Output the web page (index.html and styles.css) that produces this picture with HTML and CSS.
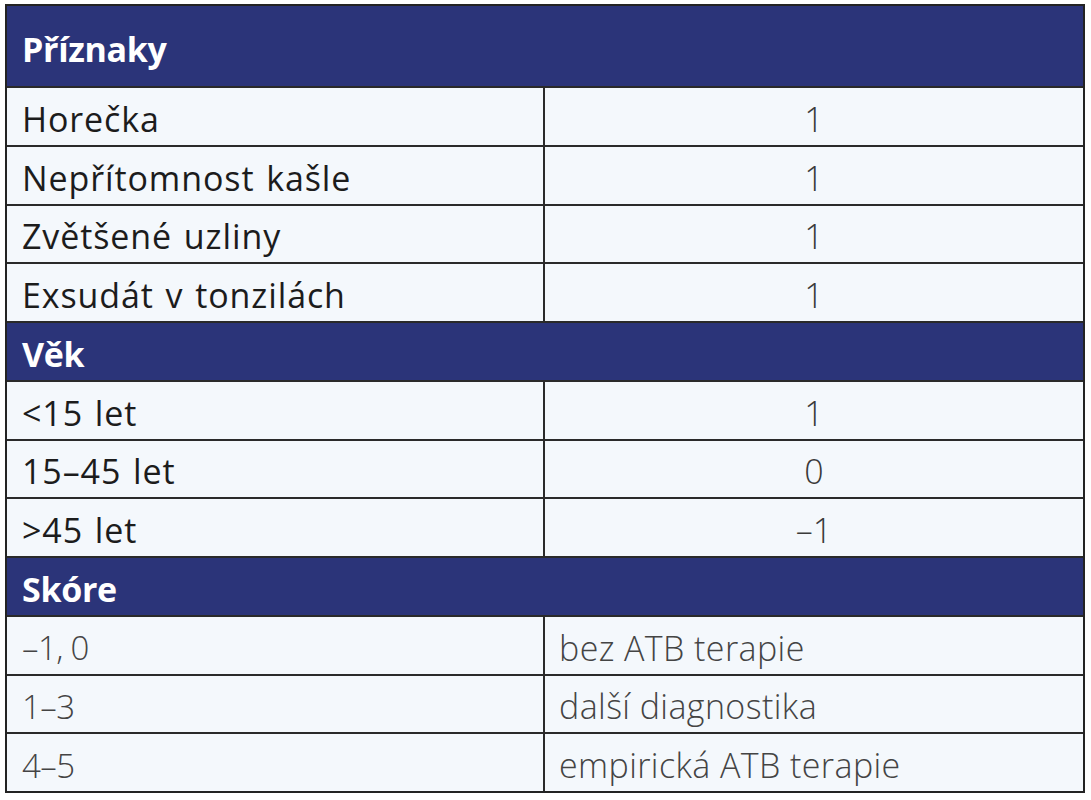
FILE: index.html
```html
<!DOCTYPE html>
<html lang="cs">
<head>
<meta charset="utf-8">
<title>Centorovo skóre</title>
<link rel="stylesheet" href="styles.css">
</head>
<body>
<div class="table">
  <div class="row head first"><span class="h">Příznaky</span></div>
  <div class="row"><div class="c l">Horečka</div><div class="c r">1</div></div>
  <div class="row"><div class="c l">Nepřítomnost kašle</div><div class="c r">1</div></div>
  <div class="row"><div class="c l">Zvětšené uzliny</div><div class="c r">1</div></div>
  <div class="row"><div class="c l">Exsudát v tonzilách</div><div class="c r">1</div></div>
  <div class="row head"><span class="h">Věk</span></div>
  <div class="row"><div class="c l">&lt;15 let</div><div class="c r">1</div></div>
  <div class="row"><div class="c l">15–45 let</div><div class="c r">0</div></div>
  <div class="row"><div class="c l">&gt;45 let</div><div class="c r">–1</div></div>
  <div class="row head"><span class="h">Skóre</span></div>
  <div class="row light"><div class="c l">–1, 0</div><div class="c t">bez ATB terapie</div></div>
  <div class="row light"><div class="c l">1–3</div><div class="c t">další diagnostika</div></div>
  <div class="row light"><div class="c l">4–5</div><div class="c t">empirická ATB terapie</div></div>
</div>
</body>
</html>
```

FILE: styles.css
```css
html, body {
  margin: 0;
  padding: 0;
  background: #ffffff;
}
body {
  padding: 4px 0 0 5px;
  font-family: "Open Sans", "Liberation Sans", sans-serif;
}
.table {
  width: 1076px;
  border: 2px solid #232323;
  background: #f4f8fc;
  display: flex;
  flex-direction: column;
}
.row {
  display: grid;
  grid-template-columns: 538px 1fr;
  height: 56.75px;
  border-top: 2px solid #2a2a2a;
  box-sizing: content-box;
}
.row.first {
  border-top: none;
  height: 80px;
}
.row.head {
  background: #2b3479;
  display: flex;
  align-items: center;
}
.h {
  color: #ffffff;
  font-weight: 700;
  font-size: 34px;
  padding-left: 15px;
  padding-top: 5px;
  letter-spacing: -0.3px;
}
.c {
  display: flex;
  align-items: center;
  font-size: 34px;
  color: #1c1c1c;
  font-weight: 500;
  letter-spacing: 0.9px;
  word-spacing: 2px;
  padding-top: 5px;
  white-space: pre;
}
.c.l {
  padding-left: 15px;
  border-right: 2px solid #2a2a2a;
}
.c.r {
  justify-content: center;
  font-weight: 300;
  color: #3a3a3a;
  letter-spacing: 0;
}
.c.t {
  padding-left: 14px;
}
.row.light .c {
  font-weight: 300;
  color: #444444;
  word-spacing: 0;
}
.row.light .c.l {
  letter-spacing: -0.6px;
  font-size: 33px;
}
.row.light .c.t {
  letter-spacing: 0.4px;
}
```
